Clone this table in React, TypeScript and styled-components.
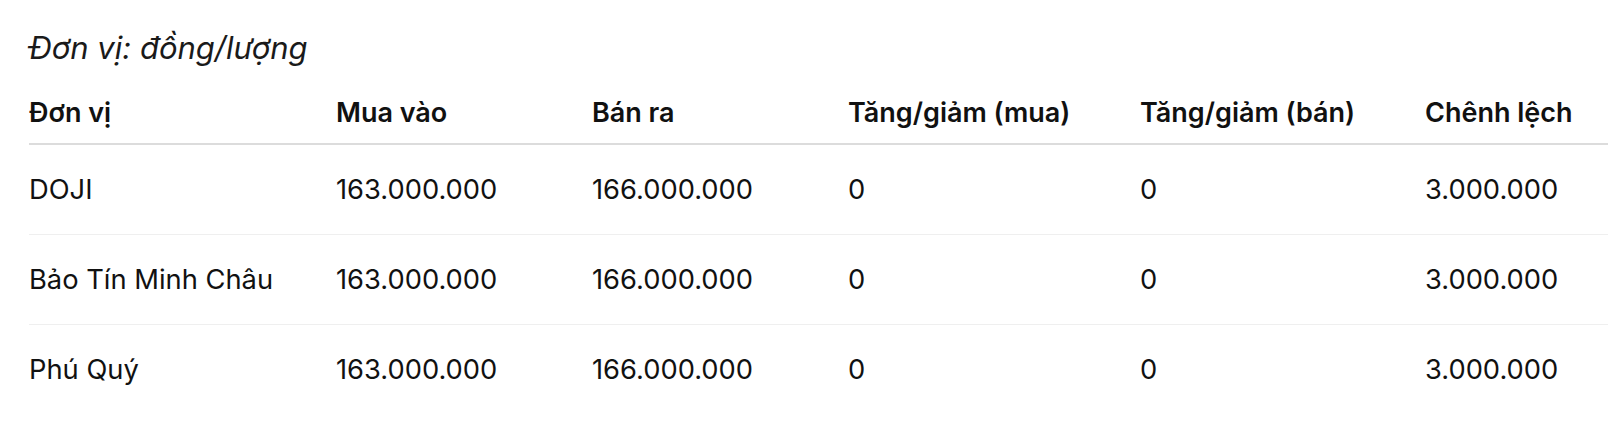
import React from "react";
import styled, { createGlobalStyle } from "styled-components";

const GlobalStyle = createGlobalStyle`
	body {
		margin: 0;
		background: #ffffff;
		font-family: Inter, "Noto Sans", sans-serif;
		color: #111111;
	}
`;

const Wrapper = styled.div`
	padding: 28px 0 0 29px;
`;

const Unit = styled.div`
	font-size: 31px;
	font-style: italic;
	line-height: 40px;
	color: #1a1a1a;
	margin-bottom: 27px;
`;

const Table = styled.table`
	width: 100%;
	border-collapse: collapse;
	table-layout: fixed;
`;

const Col = styled.col<{ $width?: number }>`
	width: ${(p) => (p.$width ? `${p.$width}px` : "auto")};
`;

const HeadCell = styled.th`
	text-align: left;
	font-size: 27px;
	font-weight: 600;
	padding: 0 0 12px 0;
	line-height: 36px;
	border-bottom: 2px solid #dcdcdc;
	white-space: nowrap;
`;

const Row = styled.tr`
	border-bottom: 1px solid #efefef;
	&:last-child {
		border-bottom: none;
	}
`;

const Cell = styled.td`
	font-size: 27.3px;
	font-weight: 400;
	height: 89px;
	padding: 0;
	vertical-align: middle;
	white-space: nowrap;
`;

const columns = [
	{ label: "Đơn vị", width: 307 },
	{ label: "Mua vào", width: 256 },
	{ label: "Bán ra", width: 256 },
	{ label: "Tăng/giảm (mua)", width: 292 },
	{ label: "Tăng/giảm (bán)", width: 285 },
	{ label: "Chênh lệch" },
];

const rows = [
	["DOJI", "163.000.000", "166.000.000", "0", "0", "3.000.000"],
	["Bảo Tín Minh Châu", "163.000.000", "166.000.000", "0", "0", "3.000.000"],
	["Phú Quý", "163.000.000", "166.000.000", "0", "0", "3.000.000"],
];

export default function App() {
	return (
		<>
			<GlobalStyle />
			<Wrapper>
				<Unit>Đơn vị: đồng/lượng</Unit>
				<Table>
					<colgroup>
						{columns.map((c) => (
							<Col key={c.label} $width={c.width} />
						))}
					</colgroup>
					<thead>
						<tr>
							{columns.map((c) => (
								<HeadCell key={c.label}>{c.label}</HeadCell>
							))}
						</tr>
					</thead>
					<tbody>
						{rows.map((r) => (
							<Row key={r[0]}>
								{r.map((v, i) => (
									<Cell key={i}>{v}</Cell>
								))}
							</Row>
						))}
					</tbody>
				</Table>
			</Wrapper>
		</>
	);
}
